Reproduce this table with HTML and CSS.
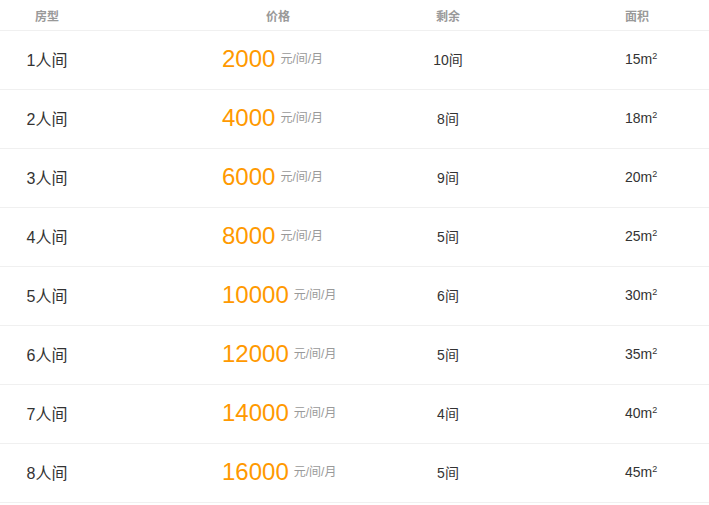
FILE: index.html
```html
<!DOCTYPE html>
<html lang="zh-CN">
<head>
<meta charset="utf-8">
<title>房型价格</title>
<link rel="stylesheet" href="styles.css">
</head>
<body>
<div class="table">
  <div class="row head">
    <div class="c1">房型</div>
    <div class="c2">价格</div>
    <div class="c3">剩余</div>
    <div class="c4">面积</div>
  </div>
  <div class="row"><div class="c1">1人间</div><div class="c2"><span class="price">2000</span><span class="unit">元/间/月</span></div><div class="c3">10间</div><div class="c4">15m<sup>2</sup></div></div>
  <div class="row"><div class="c1">2人间</div><div class="c2"><span class="price">4000</span><span class="unit">元/间/月</span></div><div class="c3">8间</div><div class="c4">18m<sup>2</sup></div></div>
  <div class="row"><div class="c1">3人间</div><div class="c2"><span class="price">6000</span><span class="unit">元/间/月</span></div><div class="c3">9间</div><div class="c4">20m<sup>2</sup></div></div>
  <div class="row"><div class="c1">4人间</div><div class="c2"><span class="price">8000</span><span class="unit">元/间/月</span></div><div class="c3">5间</div><div class="c4">25m<sup>2</sup></div></div>
  <div class="row"><div class="c1">5人间</div><div class="c2"><span class="price">10000</span><span class="unit">元/间/月</span></div><div class="c3">6间</div><div class="c4">30m<sup>2</sup></div></div>
  <div class="row"><div class="c1">6人间</div><div class="c2"><span class="price">12000</span><span class="unit">元/间/月</span></div><div class="c3">5间</div><div class="c4">35m<sup>2</sup></div></div>
  <div class="row"><div class="c1">7人间</div><div class="c2"><span class="price">14000</span><span class="unit">元/间/月</span></div><div class="c3">4间</div><div class="c4">40m<sup>2</sup></div></div>
  <div class="row"><div class="c1">8人间</div><div class="c2"><span class="price">16000</span><span class="unit">元/间/月</span></div><div class="c3">5间</div><div class="c4">45m<sup>2</sup></div></div>
</div>
</body>
</html>
```
FILE: styles.css
```css
html, body {
  margin: 0;
  padding: 0;
  background: #fff;
}
body {
  font-family: "Liberation Sans", "Noto Sans CJK SC", sans-serif;
  color: #333;
}
.table {
  width: 709px;
}
.row {
  display: grid;
  grid-template-columns: 94px 282px 144px 1fr;
  align-items: center;
  height: 56px;
  padding-bottom: 2px;
  border-bottom: 1px solid #f0f0f0;
  font-size: 14px;
}
.row.head {
  height: 30px;
  padding-bottom: 0;
  font-size: 12px;
  font-weight: bold;
  color: #999;
}
.c1 {
  text-align: center;
  font-size: 16px;
}
.head .c1 { font-size: 12px; }
.c2 {
  padding-left: 128px;
  display: flex;
  align-items: baseline;
  gap: 5px;
}
.head .c2 {
  padding-left: 86px;
  justify-content: center;
}
.c3 {
  text-align: center;
}
.c4 {
  padding-left: 105px;
}
.price {
  font-size: 24px;
  color: #ff9900;
}
.unit {
  font-size: 12px;
  color: #999;
  position: relative;
  top: -4px;
}
sup {
  font-size: 9px;
  vertical-align: 5px;
  line-height: 0;
}
```
